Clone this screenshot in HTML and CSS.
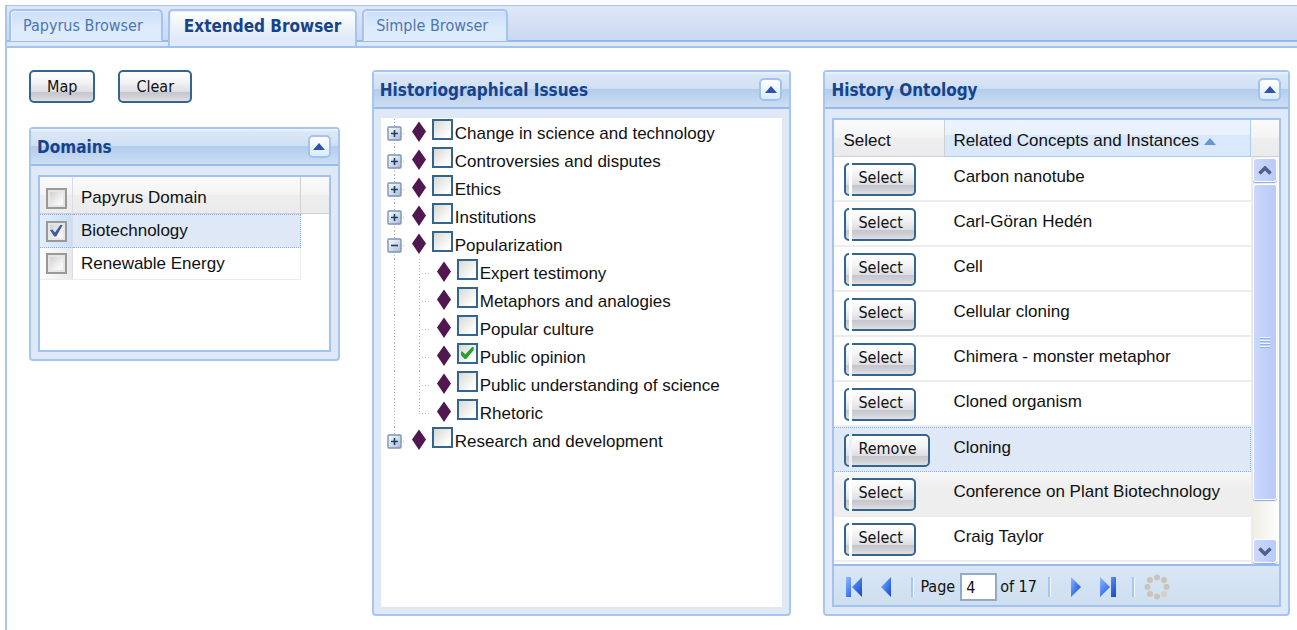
FILE: index.html
```html
<!DOCTYPE html>
<html lang="en">
<head>
<meta charset="utf-8">
<title>Extended Browser</title>
<link rel="stylesheet" href="styles.css">
</head>
<body>
<svg class="defs" aria-hidden="true">
  <defs>
    <linearGradient id="boxfill" x1="0" y1="0" x2="1" y2="1"><stop offset="0" stop-color="#fff"/><stop offset="1" stop-color="#a9bbd6"/></linearGradient>
    <linearGradient id="blue" x1="0" y1="0" x2="1" y2="1"><stop offset="0" stop-color="#8fb8ff"/><stop offset=".55" stop-color="#3c78ec"/><stop offset="1" stop-color="#1c48b8"/></linearGradient>
    <symbol id="plus" viewBox="0 0 25 28"><path class="dots" d="M13.5 0V28M22 14.5H24"/><rect x="7" y="8" width="13" height="13" rx="1" fill="url(#boxfill)" stroke="#7d93b8" stroke-width="1.4"/><path d="M10 14.5h7M13.5 11v7" stroke="#1d3f6b" stroke-width="1.6"/></symbol>
    <symbol id="plus-end" viewBox="0 0 25 28"><path class="dots" d="M13.5 0V8M22 14.5H24"/><rect x="7" y="8" width="13" height="13" rx="1" fill="url(#boxfill)" stroke="#7d93b8" stroke-width="1.4"/><path d="M10 14.5h7M13.5 11v7" stroke="#1d3f6b" stroke-width="1.6"/></symbol>
    <symbol id="minus" viewBox="0 0 25 28"><path class="dots" d="M13.5 0V28M22 14.5H24"/><rect x="7" y="8" width="13" height="13" rx="1" fill="url(#boxfill)" stroke="#7d93b8" stroke-width="1.4"/><path d="M10 14.5h7" stroke="#1d3f6b" stroke-width="1.6"/></symbol>
    <symbol id="line" viewBox="0 0 25 28"><path class="dots" d="M13.5 0V28"/></symbol>
    <symbol id="elbow" viewBox="0 0 25 28"><path class="dots" d="M13.5 0V28M16 14.5H24"/></symbol>
    <symbol id="elbow-end" viewBox="0 0 25 28"><path class="dots" d="M13.5 0V14M13 14.5H24"/></symbol>
    <symbol id="diamond" viewBox="0 0 25 28"><path d="M13 2.5L20 12.5L13 23L6 12.5Z" fill="#50184f"/></symbol>
    <symbol id="up" viewBox="0 0 12 7"><path d="M6 0L12 7H0Z" fill="#2f52b0"/></symbol>
  </defs>
</svg>
<main class="frame">
  <nav class="tabs">
    <a class="tab" href="#papyrus">Papyrus Browser</a>
    <a class="tab active" href="#extended">Extended Browser</a>
    <a class="tab" href="#simple">Simple Browser</a>
  </nav>
  <div class="content">
    <div class="side">
      <div class="actions"><button class="btn">Map</button><button class="btn">Clear</button></div>
      <section class="panel">
        <header><h2>Domains</h2><button class="tool" aria-label="Collapse Domains"><svg><use href="#up"/></svg></button></header>
        <div class="grid domains">
          <table>
            <thead><tr><th class="tick"><input type="checkbox" aria-label="Select all"></th><th>Papyrus Domain</th><th class="filler"></th></tr></thead>
            <tbody>
              <tr class="selected"><td class="tick"><input type="checkbox" id="d1" checked></td><td><label for="d1">Biotechnology</label></td></tr>
              <tr><td class="tick"><input type="checkbox" id="d2"></td><td><label for="d2">Renewable Energy</label></td></tr>
            </tbody>
          </table>
        </div>
      </section>
    </div>

    <section class="panel tall">
      <header><h2>Historiographical Issues</h2><button class="tool" aria-label="Collapse Historiographical Issues"><svg><use href="#up"/></svg></button></header>
      <ul class="tree">
        <li><button class="node" aria-label="Expand"><svg><use href="#plus"/></svg></button><svg><use href="#diamond"/></svg><input type="checkbox" id="t1"><label for="t1">Change in science and technology</label></li>
        <li><button class="node" aria-label="Expand"><svg><use href="#plus"/></svg></button><svg><use href="#diamond"/></svg><input type="checkbox" id="t2"><label for="t2">Controversies and disputes</label></li>
        <li><button class="node" aria-label="Expand"><svg><use href="#plus"/></svg></button><svg><use href="#diamond"/></svg><input type="checkbox" id="t3"><label for="t3">Ethics</label></li>
        <li><button class="node" aria-label="Expand"><svg><use href="#plus"/></svg></button><svg><use href="#diamond"/></svg><input type="checkbox" id="t4"><label for="t4">Institutions</label></li>
        <li><button class="node" aria-label="Collapse"><svg><use href="#minus"/></svg></button><svg><use href="#diamond"/></svg><input type="checkbox" id="t5"><label for="t5">Popularization</label></li>
        <li><svg><use href="#line"/></svg><svg><use href="#elbow"/></svg><svg><use href="#diamond"/></svg><input type="checkbox" id="t6"><label for="t6">Expert testimony</label></li>
        <li><svg><use href="#line"/></svg><svg><use href="#elbow"/></svg><svg><use href="#diamond"/></svg><input type="checkbox" id="t7"><label for="t7">Metaphors and analogies</label></li>
        <li><svg><use href="#line"/></svg><svg><use href="#elbow"/></svg><svg><use href="#diamond"/></svg><input type="checkbox" id="t8"><label for="t8">Popular culture</label></li>
        <li><svg><use href="#line"/></svg><svg><use href="#elbow"/></svg><svg><use href="#diamond"/></svg><input type="checkbox" id="t9" checked><label for="t9">Public opinion</label></li>
        <li><svg><use href="#line"/></svg><svg><use href="#elbow"/></svg><svg><use href="#diamond"/></svg><input type="checkbox" id="t10"><label for="t10">Public understanding of science</label></li>
        <li><svg><use href="#line"/></svg><svg><use href="#elbow-end"/></svg><svg><use href="#diamond"/></svg><input type="checkbox" id="t11"><label for="t11">Rhetoric</label></li>
        <li><button class="node" aria-label="Expand"><svg><use href="#plus-end"/></svg></button><svg><use href="#diamond"/></svg><input type="checkbox" id="t12"><label for="t12">Research and development</label></li>
      </ul>
    </section>

    <section class="panel tall">
      <header><h2>History Ontology</h2><button class="tool" aria-label="Collapse History Ontology"><svg><use href="#up"/></svg></button></header>
      <div class="grid ontology">
        <div class="view">
          <table>
            <thead><tr><th class="pick">Select</th><th class="sorted">Related Concepts and Instances <svg class="sort" viewBox="0 0 12 7"><path d="M6 0L12 7H0Z" fill="#6796d3"/></svg></th></tr></thead>
            <tbody>
              <tr><td><button class="btn cut">Select</button></td><td>Carbon nanotube</td></tr>
              <tr><td><button class="btn cut">Select</button></td><td>Carl-Göran Hedén</td></tr>
              <tr><td><button class="btn cut">Select</button></td><td>Cell</td></tr>
              <tr><td><button class="btn cut">Select</button></td><td>Cellular cloning</td></tr>
              <tr><td><button class="btn cut">Select</button></td><td>Chimera - monster metaphor</td></tr>
              <tr><td><button class="btn cut">Select</button></td><td>Cloned organism</td></tr>
              <tr class="selected"><td><button class="btn cut">Remove</button></td><td>Cloning</td></tr>
              <tr class="hover"><td><button class="btn cut">Select</button></td><td>Conference on Plant Biotechnology</td></tr>
              <tr><td><button class="btn cut">Select</button></td><td>Craig Taylor</td></tr>
            </tbody>
          </table>
          <div class="gutter">
            <div class="gutter-head"></div>
            <div class="scrollbar">
              <button class="arrow" aria-label="Scroll up"><svg viewBox="0 0 14 9"><path d="M1.500 7.500L7 2L12.500 7.500"/></svg></button>
              <div class="track"><div class="thumb"><i></i><i></i><i></i><i></i></div></div>
              <button class="arrow" aria-label="Scroll down"><svg viewBox="0 0 14 9"><path d="M1.500 1.500L7 7L12.500 1.500"/></svg></button>
            </div>
          </div>
        </div>
        <div class="pager">
          <button aria-label="First page"><svg viewBox="0 0 18 20"><path d="M1 0H6V20H1ZM17 0V20L7 10Z"/></svg></button>
          <button aria-label="Previous page"><svg viewBox="0 0 18 20"><path d="M13 0V20L3 10Z"/></svg></button>
          <span class="sep"></span>
          <label for="page">Page</label><input id="page" type="text" value="4"><span>of 17</span>
          <span class="sep after"></span>
          <button aria-label="Next page"><svg viewBox="0 0 18 20"><path d="M5 0L15 10L5 20Z"/></svg></button>
          <button aria-label="Last page"><svg viewBox="0 0 18 20"><path d="M1 0L11 10L1 20ZM12 0H17V20H12Z"/></svg></button>
          <span class="sep last"></span>
          <button aria-label="Refresh"><svg class="spin" viewBox="0 0 26 26"><g fill="#c9c3b8"><circle cx="13" cy="3.500" r="3"/><circle cx="6" cy="6" r="3"/><circle cx="20" cy="6" r="3"/><circle cx="3.500" cy="13" r="3"/><circle cx="22.500" cy="13" r="3"/><circle cx="6" cy="20" r="3"/><circle cx="20" cy="20" r="3" fill="#d6cfc6"/><circle cx="13" cy="22.500" r="3"/></g></svg></button>
        </div>
      </div>
    </section>
  </div>
</main>
</body>
</html>
```
FILE: styles.css
```css
* { box-sizing: border-box; }
body {
  margin: 0;
  padding: 5px 0 0 5px;
  background: #fff;
  color: #111;
  font: 17px/20px "Liberation Sans", Arial, sans-serif;
}
button { padding: 0; border: 0; background: none; color: inherit; font: inherit; }
.defs { position: absolute; width: 0; height: 0; }
.dots { fill: none; stroke: #b4b4b4; stroke-width: 1; stroke-dasharray: 1 2; }

.frame {
  min-height: calc(100vh - 5px);
  border: solid #a9c6ee;
  border-width: 1px 0 0 2px;
}
.tabs {
  display: flex;
  gap: 5px;
  height: 42px;
  padding: 3px 0 0 2px;
  border-bottom: 2px solid #a3c2ec;
  background: linear-gradient(#dde7f7, #cad9f0 34px, #8db2e3 34px, #9fc0ec 36px, #dfe8f6 36px);
  font: 16px/20px "DejaVu Sans Condensed", Tahoma, sans-serif;
}
.tab {
  height: 32px;
  padding: 5px 18px 0 12px;
  border: 2px solid #a3c4f0;
  border-bottom: 0;
  border-radius: 5px 5px 0 0;
  background: linear-gradient(#cbdff8, #deebfd 60%);
  box-shadow: inset 1px 1px #e8f1fd;
  color: #4a76b4;
  text-decoration: none;
}
.tab.active {
  height: 37px;
  padding: 5px 14px 0;
  background: linear-gradient(#fff, #dfe9f8 80%);
  color: #17428c;
  font-size: 17px;
  font-weight: bold;
}

.content {
  display: grid;
  grid-template-columns: 311fr 420fr 467fr;
  gap: 32px;
  align-items: start;
  padding: 22px 7px 12px 22px;
}
.actions { display: flex; gap: 23px; margin-bottom: 24px; }
.btn {
  height: 33px;
  padding: 0 16px;
  border: 2px solid #33658f;
  border-radius: 5px;
  background: linear-gradient(#fff, #f3f3f5 35%, #dddde3 68%, #c6c6ce 70%, #cfcfd6 85%, #e2e2e4);
  font: 16px/20px "DejaVu Sans Condensed", Tahoma, sans-serif;
}

.panel {
  border: 2px solid #a6c5f0;
  border-radius: 4px;
  background: #dfe8f6;
  padding-bottom: 7px;
}
.panel header {
  display: flex;
  align-items: center;
  justify-content: space-between;
  height: 37px;
  padding: 0 7px 0 6px;
  border-bottom: 2px solid #99bbe8;
  background: linear-gradient(#f0f5fc, #dbe7f6 3px, #cfdff3 49%, #b3cdec 50%, #cddef3);
}
.panel h2 {
  margin: 0;
  color: #17428c;
  font: bold 17px/20px "DejaVu Sans Condensed", Tahoma, sans-serif;
}
.tool {
  display: grid;
  place-items: center;
  width: 23px;
  height: 23px;
  border: 2px solid #a2c3ef;
  border-radius: 5px;
  background: linear-gradient(#fff, #d9edff);
}
.tool svg { width: 12px; height: 7px; }
.tall { display: flex; flex-direction: column; min-height: 546px; }

.grid { margin: 9px 7px 0; border: 2px solid #a2c3ef; background: #fff; }
table { width: 100%; border-collapse: separate; border-spacing: 0; table-layout: fixed; }
th, td { padding: 0 8px; text-align: left; font-weight: normal; }
th {
  height: 37px;
  padding-top: 6px;
  border-right: 1px solid #d0d0d0;
  border-bottom: 1px solid #d0d0d0;
  background: linear-gradient(#fafafa, #f4f4f4 49%, #eeeeef 50%, #ebebed);
  white-space: nowrap;
}
.domains { height: 177px; }
.domains .tick { width: 33px; padding: 0 0 0 6px; border-right: 1px solid #d9dde3; }
.domains th.tick { padding-top: 6px; }
.domains .filler { width: 28px; border-right: 0; }
.domains td { height: 32px; border-bottom: 1px solid #ededed; }
.domains td:last-child { border-right: 1px solid #ededed; }
.domains td.tick { background: linear-gradient(90deg, #fff, #e8e8ea); }
.domains .selected td { height: 34px; background: #dfe8f6; border-top: 1px dotted #8fb1e8; border-bottom: 1px dotted #8fb1e8; }
.domains .selected td:last-child { border-right: 1px dotted #8fb1e8; }
.domains .selected td.tick { background: linear-gradient(90deg, #e4eefc, #c9dff8); }

input[type="checkbox"] {
  display: block;
  flex: none;
  width: 21px;
  height: 21px;
  margin: 0;
  appearance: none;
  border: 2px solid #33658f;
  background: linear-gradient(135deg, #d8d8d2, #fff 85%);
}
input[type="checkbox"]:checked::before {
  content: "";
  display: block;
  width: 13px;
  height: 12px;
  margin: 2px;
  background: #27a22c;
  clip-path: polygon(0 38%, 12% 38%, 35% 60%, 88% 0, 100% 0, 100% 24%, 42% 100%, 30% 100%, 0 66%);
}
.domains input[type="checkbox"] {
  border-color: #999;
  background: linear-gradient(135deg, #c8cbd0, #f6f6f6 70%);
  box-shadow: inset 0 0 0 2px #e6e6e6;
}
.domains input[type="checkbox"]:checked::before {
  background: #40599f;
  clip-path: polygon(0 45%, 18% 42%, 38% 66%, 82% 0, 100% 0, 48% 100%, 32% 100%);
}

.tree { flex: 1; margin: 9px 7px 0; padding: 1px 0 0; background: #fff; list-style: none; }
.tree li { display: flex; height: 28px; align-items: flex-start; }
.tree svg { display: block; flex: none; width: 25px; height: 28px; }
.tree input { margin-left: 1px; }
.tree label { padding: 5px 0 0 2px; white-space: nowrap; }

.ontology { flex: 1; display: flex; flex-direction: column; }
.view { flex: 1; display: flex; }
.view table { flex: 1; width: 0; align-self: flex-start; }
.view .pick { width: 111px; }
.view th:first-child { padding-left: 9px; }
.view th.sorted { border-color: #a9cdf5; background: linear-gradient(#ebf3fd, #e9f2fd 42%, #d9e8fb 43%, #d9e8fb); }
.sort { width: 12px; height: 7px; vertical-align: 1px; }
.view td { height: 45px; padding-bottom: 4px; border-bottom: 2px solid #ededed; white-space: nowrap; }
.view td:first-child { padding: 2px 0 0 10px; }
.view .selected td { border-top: 1px dotted #8fb1e8; border-bottom: 1px dotted #8fb1e8; background: #dfe8f6; }
.view .selected td:last-child { border-right: 1px dotted #8fb1e8; }
.view .hover td { background: linear-gradient(#f7f7f7, #eee 40%); }
.cut { position: relative; display: block; padding: 0 11px 3px 12px; }
.cut::before {
  content: "";
  position: absolute;
  left: 3px;
  top: -2px;
  bottom: -2px;
  width: 3px;
  background: #fff;
}
.selected .cut::before { background: #eaf0fa; }

.gutter { display: flex; flex-direction: column; width: 28px; }
.gutter-head { height: 37px; border-bottom: 1px solid #d0d0d0; background: linear-gradient(#fafafa, #f4f4f4 49%, #eeeeef 50%, #ebebed); }
.scrollbar { flex: 1; display: flex; flex-direction: column; padding: 1px 2px; background: linear-gradient(90deg, #eeede5, #fefefb); }
.arrow, .thumb { border: 1px solid #fff; border-radius: 3px; background: linear-gradient(90deg, #cad8fc, #b7cafa); box-shadow: 0 1px 1px #8aa5d8; }
.arrow { height: 24px; display: grid; place-items: center; }
.arrow svg { width: 14px; height: 9px; fill: none; stroke: #4d6185; stroke-width: 3.5; }
.track { flex: 1; padding-top: 2px; }
.thumb { display: flex; flex-direction: column; align-items: center; justify-content: center; gap: 2px; height: 89%; }
.thumb i { width: 10px; height: 1px; background: #eef4fe; box-shadow: 0 1px #8cb0f8; }

.pager {
  display: flex;
  align-items: center;
  height: 41px;
  padding: 3px 0 0 11px;
  border-top: 2px solid #99bbe8;
  background: linear-gradient(#d9e6f5, #cedff0);
  font: 16px/20px "DejaVu Sans Condensed", Tahoma, sans-serif;
}
.pager button { width: 18px; height: 20px; margin-right: 15px; }
.pager svg { display: block; width: 18px; height: 20px; fill: url(#blue); }
.pager .spin { width: 26px; height: 26px; margin-top: -3px; }
.pager input {
  width: 37px;
  height: 28px;
  margin: 0 3px 0 5px;
  padding: 0 4px;
  border: 2px solid #8fabc9;
  background: #fff;
  color: inherit;
  font: inherit;
}
.sep { width: 3px; height: 20px; margin: 0 6px 0 0; border-left: 2px solid #a3c8f5; border-right: 1px solid #f2f7fd; }
.sep.after { margin: 0 15px 0 11px; }
.sep.last { margin: 0 9px 0 0; }
```
